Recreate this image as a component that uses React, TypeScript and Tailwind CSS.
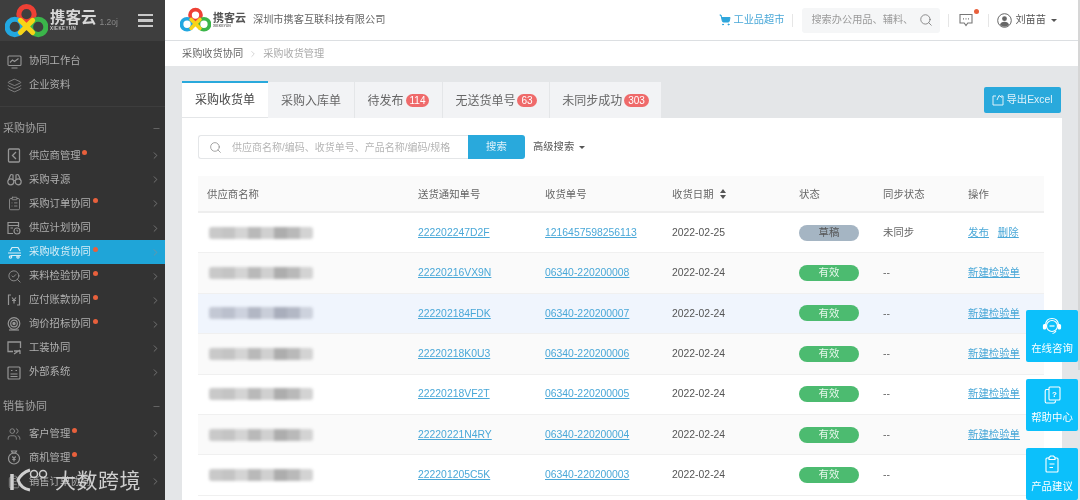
import { ReactNode } from 'react';
import {
  ChevronRight,
  ClipboardList,
  Layers,
  Minus,
  Search,
  SearchCheck,
  ShoppingCart,
  Users,
} from 'lucide-react';

const FONT = "font-['Liberation_Sans','Noto_Sans_CJK_SC',sans-serif]";

function Logo({ size }: { size: number }) {
  // three rings plus the yellow knot in the middle
  return (
    <svg width={size} height={size * 0.83} viewBox="0 0 42 35" fill="none">
      <circle cx="21" cy="11" r="7.5" stroke="#ee4035" strokeWidth="5" />
      <circle cx="9.5" cy="23.5" r="7.5" stroke="#22a7e0" strokeWidth="5" />
      <circle cx="32.5" cy="23.5" r="7.5" stroke="#3bb54a" strokeWidth="5" />
      <path d="M15 17 L27 29 M27 17 L15 29" stroke="#f7d417" strokeWidth="5" strokeLinecap="round" />
    </svg>
  );
}

function Workbench() {
  return (
    <svg width="15" height="14" viewBox="0 0 15 14" fill="none" stroke="currentColor" strokeWidth="1.1">
      <rect x="1" y="1" width="13" height="9.5" rx="1" />
      <path d="M3 7.5 L5.5 5 L7.5 6.5 L11.5 3.5 M4.5 13 H10.5" />
    </svg>
  );
}

function Supplier() {
  return (
    <svg width="14" height="15" viewBox="0 0 14 15" fill="none" stroke="currentColor" strokeWidth="1.3">
      <rect x="1.5" y="1" width="11" height="13" rx="1" />
      <path d="M9 4 L5.5 7.5 L9 11" />
    </svg>
  );
}

function Scope() {
  return (
    <svg width="15" height="13" viewBox="0 0 15 13" fill="none" stroke="currentColor" strokeWidth="1.2">
      <circle cx="3.8" cy="8.8" r="3" />
      <circle cx="11.2" cy="8.8" r="3" />
      <path d="M1.2 7.5 L3.5 2 Q4.5 1 6 2 V7 M13.8 7.5 L11.5 2 Q10.5 1 9 2 V7 M6.5 7.5 H8.5" />
    </svg>
  );
}

function Plan() {
  return (
    <svg width="14" height="14" viewBox="0 0 14 14" fill="none" stroke="currentColor" strokeWidth="1.2">
      <path d="M6 12.5 H1 V1.5 H11.5 V6 M1 4.5 H11.5 M3.5 7 H6" />
      <circle cx="10" cy="10" r="3" />
      <path d="M10 8.7 V10 H11.2" strokeWidth="0.9" />
    </svg>
  );
}

function Receive() {
  return (
    <svg width="15" height="13" viewBox="0 0 15 13" fill="none" stroke="currentColor" strokeWidth="1.2">
      <path d="M3 5 L5 1.5 H11 L13 5" />
      <path d="M1 7 H14 M4 9.5 H14" />
      <circle cx="3.5" cy="11" r="1.2" />
      <circle cx="11" cy="11" r="1.2" />
    </svg>
  );
}

function Payable() {
  return (
    <svg width="14" height="14" viewBox="0 0 14 14" fill="none" stroke="currentColor" strokeWidth="1.2">
      <path d="M4 2 H1.5 V12 M10 12 H12.5 V2" />
      <path d="M5 4.5 L7 7 L9 4.5 M5 7.5 H9 M7 7 V10.5" />
    </svg>
  );
}

function Bidding() {
  return (
    <svg width="14" height="14" viewBox="0 0 14 14" fill="none" stroke="currentColor" strokeWidth="1.2">
      <circle cx="7" cy="6.5" r="5.8" />
      <circle cx="7" cy="6.5" r="3.3" />
      <circle cx="7" cy="6.5" r="1.1" fill="currentColor" />
      <path d="M2 13 H12" />
    </svg>
  );
}

function Tooling() {
  return (
    <svg width="15" height="14" viewBox="0 0 15 14" fill="none" stroke="currentColor" strokeWidth="1.3">
      <path d="M6 10.5 H1 V1 H13.5 V7" />
      <path d="M7 13 L13 9 M7 10 H13 V13" />
    </svg>
  );
}

function ExternalSys() {
  return (
    <svg width="14" height="14" viewBox="0 0 14 14" fill="none" stroke="currentColor" strokeWidth="1.2">
      <rect x="1" y="1" width="12" height="12" rx="1" />
      <path d="M4 4.5 H5.5 M8.5 4.5 H10 M3.5 8 H10.5 M3.5 10.5 H10.5" />
    </svg>
  );
}

function MoneyBag() {
  return (
    <svg width="14" height="15" viewBox="0 0 14 15" fill="none" stroke="currentColor" strokeWidth="1.2">
      <circle cx="7" cy="8.5" r="5.5" />
      <path d="M4.5 1 H9.5 L8.5 3 H5.5 Z" />
      <path d="M5.3 6.5 L7 8.5 L8.7 6.5 M5.3 9.5 H8.7 M7 8.5 V11.5" />
    </svg>
  );
}

function MessageIcon() {
  return (
    <svg width="14" height="14" viewBox="0 0 14 14" fill="none" stroke="currentColor" strokeWidth="1.1">
      <path d="M1 1.5 H13 V10 H8.8 L7 12.5 L5.2 10 H1 Z" />
      <path d="M4 5.8 H5 M6.5 5.8 H7.5 M9 5.8 H10" strokeWidth="1.2" />
    </svg>
  );
}

function UserIcon() {
  return (
    <svg width="15" height="15" viewBox="0 0 15 15" fill="none" stroke="#666666" strokeWidth="1">
      <circle cx="7.5" cy="7.5" r="6.8" />
      <circle cx="7.5" cy="5.7" r="2.4" fill="#666666" stroke="none" />
      <path d="M3 12 Q3.8 8.8 7.5 8.8 Q11.2 8.8 12 12 Q7.5 15.5 3 12 Z" fill="#666666" stroke="none" />
    </svg>
  );
}

function HeadsetIcon() {
  return (
    <svg width="20" height="18" viewBox="0 0 20 18" fill="none" stroke="currentColor" strokeWidth="1.2">
      <circle cx="10" cy="9" r="5.5" />
      <path d="M3.5 8 Q4 1.5 10 1.5 Q16 1.5 16.5 8" />
      <rect x="1.5" y="7.5" width="2.2" height="4.5" rx="1" fill="currentColor" />
      <rect x="16.3" y="7.5" width="2.2" height="4.5" rx="1" fill="currentColor" />
      <path d="M7.5 9 H12.5" />
      <path d="M14 14 Q12.5 16.5 10.5 16.5" />
    </svg>
  );
}

function HelpIcon() {
  return (
    <svg width="17" height="18" viewBox="0 0 17 18" fill="none" stroke="currentColor" strokeWidth="1.1">
      <rect x="5" y="1" width="11" height="13" rx="1" />
      <path d="M5 3.5 H2.5 Q1.2 3.5 1.2 5 V15.5 Q1.2 17 2.5 17 H10 Q11.5 17 11.5 14.5" />
      <text x="10.5" y="10.5" textAnchor="middle" fontSize="8" fill="currentColor" stroke="none" fontWeight="bold">?</text>
    </svg>
  );
}

function SuggestIcon() {
  return (
    <svg width="14" height="18" viewBox="0 0 14 18" fill="none" stroke="currentColor" strokeWidth="1.1">
      <path d="M4 3 H2 Q1 3 1 4 V16 Q1 17 2 17 H12 Q13 17 13 16 V4 Q13 3 12 3 H10" />
      <path d="M4 4.5 V2.5 L5.5 1 H8.5 L10 2.5 V4.5 Z" />
      <path d="M4.5 9 H9.5 M4.5 12.5 H8" />
    </svg>
  );
}

type MenuItem = { icon: ReactNode; label: string; dot?: boolean; active?: boolean; arrow?: boolean };

const purchaseMenu: MenuItem[] = [
  { icon: <Supplier />, label: '供应商管理', dot: true, arrow: true },
  { icon: <Scope />, label: '采购寻源', arrow: true },
  { icon: <ClipboardList size={15} strokeWidth={1.3} />, label: '采购订单协同', dot: true, arrow: true },
  { icon: <Plan />, label: '供应计划协同', arrow: true },
  { icon: <Receive />, label: '采购收货协同', dot: true, active: true, arrow: true },
  { icon: <SearchCheck size={15} strokeWidth={1.4} />, label: '来料检验协同', dot: true, arrow: true },
  { icon: <Payable />, label: '应付账款协同', dot: true, arrow: true },
  { icon: <Bidding />, label: '询价招标协同', dot: true, arrow: true },
  { icon: <Tooling />, label: '工装协同', arrow: true },
  { icon: <ExternalSys />, label: '外部系统', arrow: true },
];

const salesMenu: MenuItem[] = [
  { icon: <Users size={14} strokeWidth={1.3} />, label: '客户管理', dot: true, arrow: true },
  { icon: <MoneyBag />, label: '商机管理', dot: true, arrow: true },
  { icon: <ClipboardList size={14} strokeWidth={1.3} />, label: '销售订单协同', arrow: true },
];

function MenuRow({ item }: { item: MenuItem }) {
  return (
    <div
      className={`flex items-center h-[24.1px] pl-[7px] pr-[4px] shrink-0 ${
        item.active ? 'bg-[#1fa5d8] text-[#d8eef7]' : 'text-[#b0b0b0]'
      }`}
    >
      <span className={`w-[22px] flex shrink-0 ${item.active ? 'text-[#d8eef7]' : 'text-[#969696]'}`}>{item.icon}</span>
      <span className="text-[10.3px] leading-none">{item.label}</span>
      {item.dot && <span className="ml-[2px] mb-[6px] w-[5px] h-[5px] rounded-full bg-[#e8603c]" />}
      {item.arrow && <ChevronRight size={11} strokeWidth={1.5} className="ml-auto text-[#8d8d8d]" />}
    </div>
  );
}

function GroupTitle({ label }: { label: string }) {
  return (
    <div className="mt-[16px] mb-[10px] flex items-center justify-between pl-[3px] pr-[4px] shrink-0">
      <span className="text-[11px] leading-none text-[#a0a0a0]">{label}</span>
      <Minus size={9} strokeWidth={1.5} className="text-[#8a8a8a]" />
    </div>
  );
}

function Sidebar() {
  return (
    <aside className="w-[165px] h-full shrink-0 flex flex-col bg-[#333333] overflow-hidden">
      <div className="h-[41px] shrink-0 bg-[#3e3e3e] flex items-center pl-[5px] pr-[12px]">
        <Logo size={43} />
        <div className="ml-[2px] flex flex-col items-start">
          <span className="text-[15.5px] leading-[16px] font-bold text-[#d8d8d8]">携客云</span>
          <span className="text-[4.5px] leading-[5px] font-bold text-[#c8c8c8] tracking-[0.4px]">XIEKEYUN</span>
        </div>
        <span className="ml-[3px] mt-[4px] text-[8.5px] text-[#8a8a8a]">1.2oj</span>
        <div className="ml-auto flex flex-col gap-[3px]">
          <span className="block w-[15px] h-[2.5px] bg-[#c8c8c8]" />
          <span className="block w-[15px] h-[2.5px] bg-[#c8c8c8]" />
          <span className="block w-[15px] h-[2.5px] bg-[#c8c8c8]" />
        </div>
      </div>
      <div className="pt-[8.5px] pb-[8px] border-b border-[#3d3d3d] shrink-0">
        <MenuRow item={{ icon: <Workbench />, label: '协同工作台' }} />
        <MenuRow item={{ icon: <Layers size={15} strokeWidth={1.2} />, label: '企业资料' }} />
      </div>
      <GroupTitle label="采购协同" />
      {purchaseMenu.map((item) => (
        <MenuRow key={item.label} item={item} />
      ))}
      <GroupTitle label="销售协同" />
      {salesMenu.map((item) => (
        <MenuRow key={item.label} item={item} />
      ))}
    </aside>
  );
}

function TopBar() {
  return (
    <header className="h-[41px] shrink-0 bg-white border-b border-[#dcdfe2] flex items-center pl-[15px]">
      <Logo size={31} />
      <div className="ml-[2px] flex flex-col items-start">
        <span className="text-[11px] leading-[12px] font-bold text-[#555555]">携客云</span>
        <span className="text-[3.5px] leading-[4px] font-bold text-[#777777]">XIEKEYUN</span>
      </div>
      <span className="ml-[7px] text-[10.2px] text-[#666666]">深圳市携客互联科技有限公司</span>
      <div className="ml-auto flex items-center pr-[23px]">
        <ShoppingCart size={12} className="text-[#2fa6dc]" fill="#2fa6dc" />
        <span className="ml-[3px] text-[10.2px] text-[#4aa8d8]">工业品超市</span>
        <span className="ml-[8px] mr-[9px] w-px h-[13px] bg-[#e6e6e6]" />
        <div className="w-[138px] h-[25px] rounded-[3px] bg-[#f5f6f7] flex items-center pl-[9px] pr-[7px]">
          <span className="text-[10.2px] text-[#9a9a9a]">搜索办公用品、辅料、</span>
          <Search size={14} strokeWidth={1.4} className="ml-auto text-[#777777]" />
        </div>
        <span className="mx-[8px] w-px h-[13px] bg-[#e6e6e6]" />
        <div className="relative ml-[2px] text-[#777777]">
          <MessageIcon />
          <span className="absolute -top-[4px] -right-[6px] w-[5px] h-[5px] rounded-full bg-[#e8603c]" />
        </div>
        <span className="ml-[15px] mr-[8px] w-px h-[13px] bg-[#e6e6e6]" />
        <UserIcon />
        <span className="ml-[3px] text-[10.2px] text-[#555555]">刘苗苗</span>
        <span className="ml-[5px] w-0 h-0 border-x-[3px] border-x-transparent border-t-[3.5px] border-t-[#555555]" />
      </div>
    </header>
  );
}

type TabItem = { label: string; width: string; badge?: string; active?: boolean };

const tabs: TabItem[] = [
  { label: '采购收货单', width: 'w-[86px]', active: true },
  { label: '采购入库单', width: 'w-[87px]' },
  { label: '待发布', width: 'w-[88px]', badge: '114' },
  { label: '无送货单号', width: 'w-[107px]', badge: '63' },
  { label: '未同步成功', width: 'w-[112px]', badge: '303' },
];

function Tabs() {
  return (
    <div className="flex items-end justify-between h-[36px] pr-[1px]">
      <div className="flex">
        {tabs.map((tab) => (
          <div
            key={tab.label}
            className={`${tab.width} h-[36px] flex items-center justify-center text-[12px] ${
              tab.active
                ? 'bg-white border-t-2 border-[#29a9dc] text-[#444444]'
                : 'bg-[#f2f3f5] border-r border-[#e4e6e8] mt-[1px] pt-[1px] text-[#666666]'
            }`}
          >
            {tab.label}
            {tab.badge && (
              <span className="ml-[2px] h-[13px] px-[4px] min-w-[19px] rounded-full bg-[#ef6a6a] text-white text-[10px] leading-[13px] text-center">
                {tab.badge}
              </span>
            )}
          </div>
        ))}
      </div>
      <div className="mb-[5px] w-[77px] h-[26px] rounded-[2px] bg-[#29a9dc] flex items-center justify-center text-[10.4px] text-[#dff2fa]">
        <svg width="12" height="12" viewBox="0 0 12 12" fill="none" stroke="currentColor" strokeWidth="1" className="mr-[2px]">
          <path d="M4 2 H1 V11 H11 V2 H9 M5 6 L7 1.5 L10 3.5" />
        </svg>
        导出Excel
      </div>
    </div>
  );
}

function SearchBar() {
  return (
    <div className="flex items-center h-6 ml-[16px] mt-[17px]">
      <div className="w-[270px] h-6 bg-white border border-[#e4e6e8] border-r-0 rounded-l-[3px] flex items-center pl-[10px] overflow-hidden">
        <Search size={13} strokeWidth={1.4} className="text-[#8a8a8a] shrink-0" />
        <span className="ml-[10px] text-[10px] text-[#b5b5b5] whitespace-nowrap">供应商名称/编码、收货单号、产品名称/编码/规格</span>
      </div>
      <div className="w-[57px] h-6 bg-[#29a9dc] rounded-r-[3px] flex items-center justify-center text-[10.4px] text-[#dff2fa]">搜索</div>
      <span className="ml-[8px] text-[10.3px] text-[#555555]">高级搜索</span>
      <span className="ml-[5px] w-0 h-0 border-x-[3px] border-x-transparent border-t-[3.5px] border-t-[#555555]" />
    </div>
  );
}

const COLS = 'grid grid-cols-[211px_127px_127px_127px_84px_85px_85px] items-center pl-[9px]';

// blurred-out supplier names, the shades of the mosaic tiles
const mosaic = ['#c9c9c9', '#c4c4c4', '#d4d4d4', '#b9b9b9', '#d0d0d0', '#adadad', '#b9b9b9', '#d3d3d3'];
const mosaicBlue = ['#c3c8d4', '#bbc0cd', '#cdd2de', '#b2b7c4', '#c9ced9', '#a9aebc', '#b3b8c5', '#cdd2dd'];

function Mosaic({ blue }: { blue?: boolean }) {
  const shades = blue ? mosaicBlue : mosaic;
  return (
    <div className="flex ml-[2px] w-[104px] h-[12px] blur-[1.5px] rounded-[3px] overflow-hidden">
      {shades.map((c, i) => (
        <span key={i} className="flex-1 h-full" style={{ backgroundColor: c }} />
      ))}
    </div>
  );
}

type Row = { notice: string; receipt: string; date: string; draft?: boolean; bg: string; action?: boolean };

const rows: Row[] = [
  { notice: '222202247D2F', receipt: '1216457598256113', date: '2022-02-25', draft: true, bg: 'bg-white' },
  { notice: '22220216VX9N', receipt: '06340-220200008', date: '2022-02-24', bg: 'bg-[#fafafa]', action: true },
  { notice: '222202184FDK', receipt: '06340-220200007', date: '2022-02-24', bg: 'bg-[#f0f5fd]', action: true },
  { notice: '22220218K0U3', receipt: '06340-220200006', date: '2022-02-24', bg: 'bg-[#fafafa]', action: true },
  { notice: '22220218VF2T', receipt: '06340-220200005', date: '2022-02-24', bg: 'bg-white', action: true },
  { notice: '22220221N4RY', receipt: '06340-220200004', date: '2022-02-24', bg: 'bg-[#fafafa]', action: true },
  { notice: '222201205C5K', receipt: '06340-220200003', date: '2022-02-24', bg: 'bg-white' },
];

function Table() {
  return (
    <div className="ml-[16px] mt-[17px] w-[846px] text-[10.4px] overflow-hidden">
      <div className={`${COLS} h-[37px] pt-[2px] bg-[#fafafa] border-b-2 border-[#eeeeee] text-[#666666]`}>
        <span>供应商名称</span>
        <span>送货通知单号</span>
        <span>收货单号</span>
        <span className="flex items-center">
          收货日期
          <span className="ml-[6px] flex flex-col gap-[2px]">
            <span className="w-0 h-0 border-x-[3.5px] border-x-transparent border-b-[4px] border-b-[#555555]" />
            <span className="w-0 h-0 border-x-[3.5px] border-x-transparent border-t-[4px] border-t-[#555555]" />
          </span>
        </span>
        <span>状态</span>
        <span>同步状态</span>
        <span>操作</span>
      </div>
      {rows.map((row) => (
        <div key={row.notice} className={`${COLS} h-[40.4px] border-b border-[#f0f0f0] ${row.bg}`}>
          <Mosaic blue={row.bg === 'bg-[#f0f5fd]'} />
          <a className="text-[#4aa8d8] underline">{row.notice}</a>
          <a className="text-[#4aa8d8] underline">{row.receipt}</a>
          <span className="text-[#555555]">{row.date}</span>
          <span
            className={`w-[60px] h-4 rounded-full flex items-center justify-center ${
              row.draft ? 'bg-[#a5b5c3] text-[#555555]' : 'bg-[#4cbb70] text-[#e4f6ea]'
            }`}
          >
            {row.draft ? '草稿' : '有效'}
          </span>
          <span className="text-[#666666]">{row.draft ? '未同步' : '--'}</span>
          <span className="flex gap-[9px] text-[#4aa8d8] underline">
            {row.draft ? (
              <>
                <a>发布</a>
                <a>删除</a>
              </>
            ) : row.action ? (
              <a>新建检验单</a>
            ) : null}
          </span>
        </div>
      ))}
    </div>
  );
}

function FloatButton({ icon, label }: { icon: ReactNode; label: string }) {
  return (
    <div className="w-[52px] h-[52px] rounded-[2px] bg-[#0cc0fb] flex flex-col items-center justify-center gap-[9px] text-white">
      {icon}
      <span className="text-[10.4px] leading-none">{label}</span>
    </div>
  );
}

export default function App() {
  return (
    <div className={`${FONT} relative w-[1080px] h-[500px] overflow-hidden flex bg-white blur-[0.4px]`}>
      <Sidebar />
      <main className="flex-1 min-w-0 h-full flex flex-col bg-[#e4e6e8]">
        <TopBar />
        <div className="h-[25px] shrink-0 bg-white flex items-center pl-[17px] text-[10.2px]">
          <span className="text-[#666666]">采购收货协同</span>
          <ChevronRight size={10} strokeWidth={1.2} className="mx-[5px] text-[#aaaaaa]" />
          <span className="text-[#aaaaaa]">采购收货管理</span>
        </div>
        <div className="flex-1 min-h-0 flex flex-col pl-[17px] pr-[18px] pt-[16px]">
          <Tabs />
          <div className="flex-1 min-h-0 bg-white">
            <SearchBar />
            <Table />
          </div>
        </div>
      </main>

      {/* page scrollbar */}
      <div className="absolute right-0 top-0 w-[2px] h-[370px] bg-[#d6d6d6]" />

      {/* floating help buttons */}
      <div className="absolute left-[1026px] top-[310px] flex flex-col gap-[17px]">
        <FloatButton icon={<HeadsetIcon />} label="在线咨询" />
        <FloatButton icon={<HelpIcon />} label="帮助中心" />
        <FloatButton icon={<SuggestIcon />} label="产品建议" />
      </div>

      {/* watermark */}
      <div className="absolute left-[10px] top-[468px] flex items-center text-[#cfcfcf]">
        <svg width="38" height="24" viewBox="0 0 38 24" fill="none" stroke="currentColor" strokeWidth="2.4">
          <path d="M2 6 V22" strokeWidth="3.5" />
          <path d="M20 2 C14 4 10 8 8 12 C10 18 14 21 20 22" strokeWidth="3" />
          <circle cx="24" cy="6" r="3.5" strokeWidth="1.5" />
          <circle cx="33" cy="6" r="3.5" strokeWidth="1.5" />
        </svg>
        <span className="ml-[7px] text-[21px] leading-none tracking-[0.5px]">大数跨境</span>
      </div>
    </div>
  );
}
